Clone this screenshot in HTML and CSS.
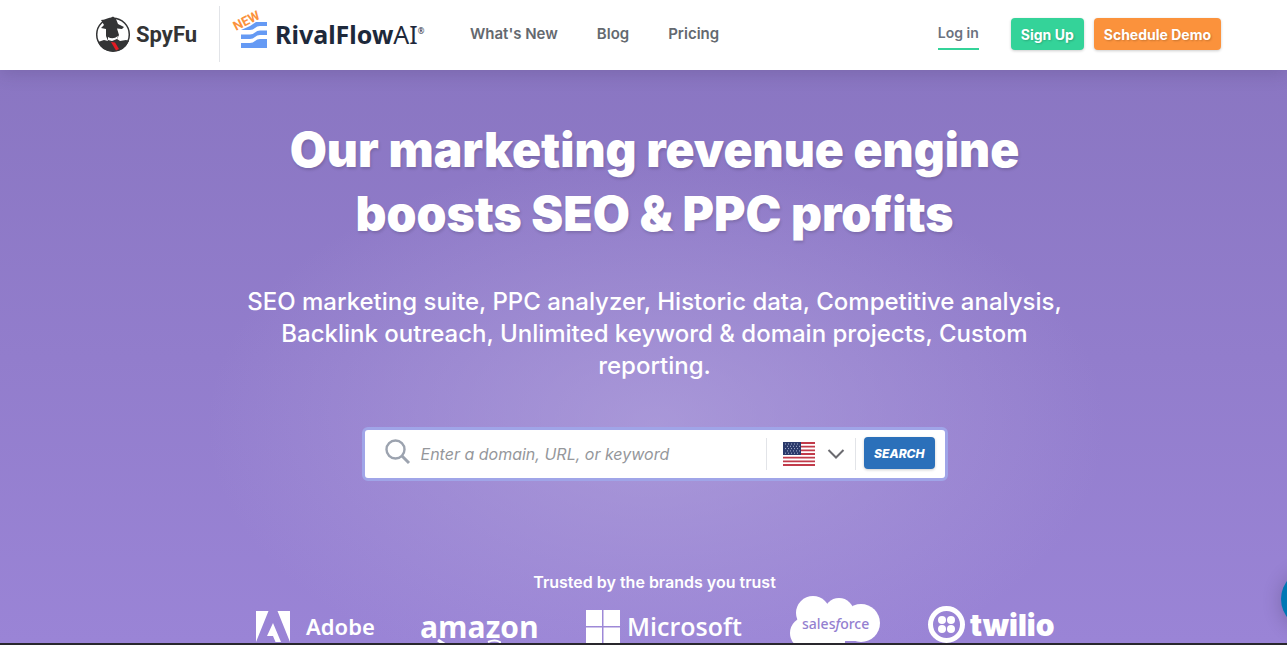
FILE: index.html
```html
<!DOCTYPE html>
<html lang="en">
  <head>
    <meta charset="UTF-8" />
    <meta name="viewport" content="width=device-width, initial-scale=1.0" />
    <title>SpyFu</title>
    <link rel="stylesheet" href="styles.css">
  </head>
  <body>
    <header class="header">
      <a class="spyfu" href="#">
        <svg width="36" height="36" viewBox="0 0 36 36" aria-hidden="true">
          <circle cx="18" cy="18.500" r="16.300" fill="#fff" stroke="#333435" stroke-width="1.500" />
          <path d="M6 4 L14 3 L18 0.500 L21 3 L23 8 L29 11 L27 13 L22 12.500 L24 19 L22 23 L25 25 L31 24 L34 25 Q29 36 18 36 Q6 35 3 26 L9 24 L13 25 L11 20 L11 13 L6 12 L9 9 Z" fill="#333435" />
          <path d="M13 21 Q18 24 23 20 L22 23 L17 25 L13 24 Z" fill="#fff" />
          <path d="M16 26 L20 26.500 L24 33 L21 34.500 Z" fill="#e31b23" />
        </svg>
        <span>SpyFu</span>
      </a>
      <a class="rival" href="#">
        <svg width="40" height="40" viewBox="0 0 40 40" aria-hidden="true">
          <g fill="#659af4">
            <path d="M9 20 L18 16 L24 12 H35 V16 H28 Q25 16 23 18 Q21 20 18 20 Z" />
            <path d="M9 24.500 H18 Q21 24.500 23 22.500 Q25 20.500 28 20.500 H35 V25 H28 Q25 25 23 27 Q21 29 18 29 H9 Z" />
            <path d="M9 33 H18 Q21 33 23 31 Q25 29 28 29 H35 V38 H9 Z" />
          </g>
          <text class="new-tag" x="4" y="21" transform="rotate(-27 4 21)">NEW</text>
        </svg>
        <span class="rival-name">RivalFlow<span class="rival-ai">AI</span><sup>®</sup></span>
      </a>
      <nav class="nav">
        <a href="#">What's New</a>
        <a href="#">Blog</a>
        <a href="#">Pricing</a>
      </nav>
      <div class="account">
        <a class="login" href="#">Log in</a>
        <button class="btn btn-green" type="button">Sign Up</button>
        <button class="btn btn-orange" type="button">Schedule Demo</button>
      </div>
    </header>

    <main class="hero">
      <h1>Our marketing revenue engine boosts SEO &amp; PPC profits</h1>
      <p class="lead">SEO marketing suite, PPC analyzer, Historic data, Competitive analysis, Backlink outreach, Unlimited keyword &amp; domain projects, Custom reporting.</p>

      <form class="search">
        <svg class="search-icon" width="26" height="26" viewBox="0 0 26 26" aria-hidden="true">
          <circle cx="10.500" cy="10.500" r="9" fill="none" stroke="#9ca3af" stroke-width="2.400" />
          <path d="M17 17 L24 24" stroke="#9ca3af" stroke-width="3" />
        </svg>
        <input type="text" placeholder="Enter a domain, URL, or keyword" aria-label="Domain, URL, or keyword">
        <button class="country" type="button" aria-label="Country: United States">
          <svg width="32" height="24" viewBox="0 0 32 24" aria-hidden="true">
            <rect width="32" height="24" fill="#fff" />
            <path d="M0 1H32M0 4.700H32M0 8.400H32M0 12H32M0 15.700H32M0 19.400H32M0 23H32" stroke="#c13b4a" stroke-width="1.800" />
            <rect width="18" height="13" fill="#2b3a6b" />
            <path d="M2 2H17M4 4.300H17M2 6.600H17M4 8.900H17M2 11.200H17" stroke="#a9b2cf" stroke-width="1" stroke-dasharray="1 2" />
          </svg>
          <svg width="18" height="12" viewBox="0 0 18 12" aria-hidden="true">
            <path d="M1.500 2 L9 9.500 L16.500 2" fill="none" stroke="#6b6b70" stroke-width="2" />
          </svg>
        </button>
        <button class="search-btn" type="submit">SEARCH</button>
      </form>

      <p class="trusted">Trusted by the brands you trust</p>
      <div class="brands">
        <svg width="117" height="48" viewBox="0 0 117 48">
          <path d="M0 15 H12.500 L0 46 Z M21.500 15 H34 V46 Z M17 27 L25 46 H19.500 L17 40 H11 Z" fill="#fff" />
          <text class="adobe" x="50" y="39">Adobe</text>
        </svg>
        <svg width="117" height="48" viewBox="0 0 117 48">
          <text class="amazon" x="-1" y="42">amazon</text>
          <path d="M17 44 Q46 65 75 50" fill="none" stroke="#fff" stroke-width="3" />
          <path d="M67 46 Q74 43 79 46 Q79 51 75 55" fill="none" stroke="#fff" stroke-width="2" />
        </svg>
        <svg width="156" height="48" viewBox="0 0 156 48">
          <path d="M0 14H16V30H0Z M17.500 14H34V30H17.500Z M0 31.500H16V48H0Z M17.500 31.500H34V48H17.500Z" fill="#fff" />
          <text class="microsoft" x="41" y="40">Microsoft</text>
        </svg>
        <svg width="90" height="48" viewBox="0 0 90 48">
          <g fill="#fff">
            <circle cx="23" cy="17" r="17" />
            <circle cx="49" cy="17" r="15" />
            <circle cx="71" cy="27" r="19" />
            <circle cx="16" cy="37" r="16" />
            <circle cx="38" cy="45" r="17" />
            <path d="M16 14 H70 L66 45 H38 L16 42 Z" />
          </g>
          <text class="salesforce" x="12" y="33">sales<tspan font-style="italic">f</tspan>orce</text>
        </svg>
        <svg width="125" height="48" viewBox="0 0 125 48">
          <circle cx="18.500" cy="28.500" r="16" fill="none" stroke="#fff" stroke-width="5" />
          <g fill="#fff">
            <circle cx="14" cy="24" r="4" />
            <circle cx="23" cy="24" r="4" />
            <circle cx="14" cy="33" r="4" />
            <circle cx="23" cy="33" r="4" />
          </g>
          <text class="twilio" x="42" y="40">twilio</text>
        </svg>
      </div>
    </main>

    <button class="chat" type="button" aria-label="Open chat"></button>
    <div class="strip"></div>
  </body>
</html>
```

FILE: styles.css
```css
* {
  box-sizing: border-box;
}

body {
  margin: 0;
  height: 100vh;
  display: flex;
  flex-direction: column;
  overflow: hidden;
  font-family: Inter, "Liberation Sans", sans-serif;
}

a {
  text-decoration: none;
}

button {
  border: none;
  font-family: inherit;
  cursor: pointer;
}

.header {
  position: relative;
  z-index: 1;
  flex: none;
  display: flex;
  align-items: center;
  height: 70px;
  padding: 0 66px 2px 95px;
  background-color: #fff;
  box-shadow: 0 4px 16px rgba(60, 50, 90, 0.2);
}

.spyfu {
  display: flex;
  align-items: center;
  gap: 5px;
  height: 56px;
  width: 125px;
  border-right: 1px solid #e2e4e8;
  color: #333435;
  font: 700 22px Roboto, sans-serif;
}

.rival {
  display: flex;
  align-items: center;
  gap: 3px;
  width: 190px;
  margin-left: 12px;
  color: #1e293b;
}

.rival svg {
  flex: none;
  margin-bottom: 8px;
  overflow: visible;
}

.rival-name {
  font: 700 25px "Noto Sans", sans-serif;
  white-space: nowrap;
}

.rival-ai {
  font-weight: 400;
}

.rival-name sup {
  font-size: 8px;
  font-weight: 400;
  vertical-align: 10px;
  line-height: 0;
}

.new-tag {
  fill: #fb923c;
  font: 700 13px Roboto, sans-serif;
}

.nav {
  display: flex;
  gap: 39px;
  margin-left: 48px;
}

.nav a {
  color: #64696f;
  font-size: 15px;
  font-weight: 600;
  line-height: 20px;
}

.account {
  display: flex;
  align-items: center;
  gap: 10px;
  margin-left: auto;
}

.login {
  margin-right: 22px;
  border-bottom: 2px solid #34d399;
  color: #6b7280;
  font-size: 14px;
  font-weight: 600;
  line-height: 30px;
}

.btn {
  height: 32px;
  padding: 0 10px;
  border-radius: 4px;
  color: #fff;
  font-size: 14px;
  font-weight: 700;
  text-shadow: 1px 1px 2px rgba(0, 0, 0, 0.2);
  box-shadow: 0 1px 3px rgba(0, 0, 0, 0.2);
}

.btn-green {
  background-color: #34d399;
}

.btn-orange {
  background-color: #fb923c;
}

.hero {
  flex: 1;
  min-height: 0;
  display: flex;
  flex-direction: column;
  align-items: center;
  padding: 48px 0 0 22px;
  overflow: hidden;
  color: #fff;
  text-align: center;
  background: radial-gradient(ellipse 450px 270px at 51% 62%, rgba(180, 165, 222, 0.65), rgba(166, 148, 216, 0)), linear-gradient(#8a76c2, #9a84d6);
}

h1 {
  max-width: 800px;
  margin: 0;
  font-size: 48px;
  font-weight: 900;
  line-height: 64px;
  text-shadow: 1px 2px 3px rgba(0, 0, 0, 0.15);
}

.lead {
  max-width: 820px;
  margin: 40px 0 0;
  font-size: 24px;
  font-weight: 500;
  line-height: 32px;
}

.search {
  flex: none;
  display: flex;
  align-items: center;
  width: 586px;
  max-width: 100%;
  height: 54px;
  margin-top: 45px;
  padding: 0 10px 0 20px;
  border: 3px solid #a0a5e8;
  border-radius: 6px;
  background-color: #fff;
}

.search-icon {
  flex: none;
  margin-bottom: 4px;
}

.search input {
  flex: 1;
  min-width: 0;
  padding: 0 10px;
  border: none;
  outline: none;
  background: none;
  font: italic 400 16px Inter, sans-serif;
}

.search input::placeholder {
  color: #95979b;
}

.country {
  display: flex;
  align-items: center;
  gap: 12px;
  height: 32px;
  width: 90px;
  padding: 0 0 0 16px;
  border-left: 1px solid #e2e4e8;
  border-right: 1px solid #e2e4e8;
  background: none;
}

.search-btn {
  height: 32px;
  margin: 0 0 2px 8px;
  padding: 0 10px;
  border-radius: 4px;
  background-color: #2b70ba;
  color: #fff;
  font-size: 12px;
  font-weight: 800;
  font-style: italic;
  box-shadow: 0 1px 3px rgba(0, 0, 0, 0.2);
}

.trusted {
  margin: 89px 0 0;
  font-size: 16px;
  font-weight: 600;
  line-height: 24px;
}

.brands {
  display: flex;
  gap: 48px;
  margin-top: 2px;
}

.brands svg {
  flex: none;
  overflow: visible;
}

.brands text {
  fill: #fff;
}

.brands .adobe {
  font: 600 22px "Noto Sans", sans-serif;
}

.brands .amazon {
  font: 700 30px "Open Sans", sans-serif;
}

.brands .microsoft {
  font: 600 25px "Open Sans", sans-serif;
}

.brands .salesforce {
  fill: #9480d0;
  font: 500 14px "Noto Sans", sans-serif;
}

.brands .twilio {
  font: 900 30px Inter, sans-serif;
}

.chat {
  position: absolute;
  right: -54px;
  top: 569px;
  width: 60px;
  height: 60px;
  padding: 0;
  border-radius: 50%;
  background-color: #0077b5;
  box-shadow: 0 2px 20px rgba(0, 0, 0, 0.2);
}

.strip {
  position: relative;
  flex: none;
  height: 2px;
  background-color: #29272d;
}
```
